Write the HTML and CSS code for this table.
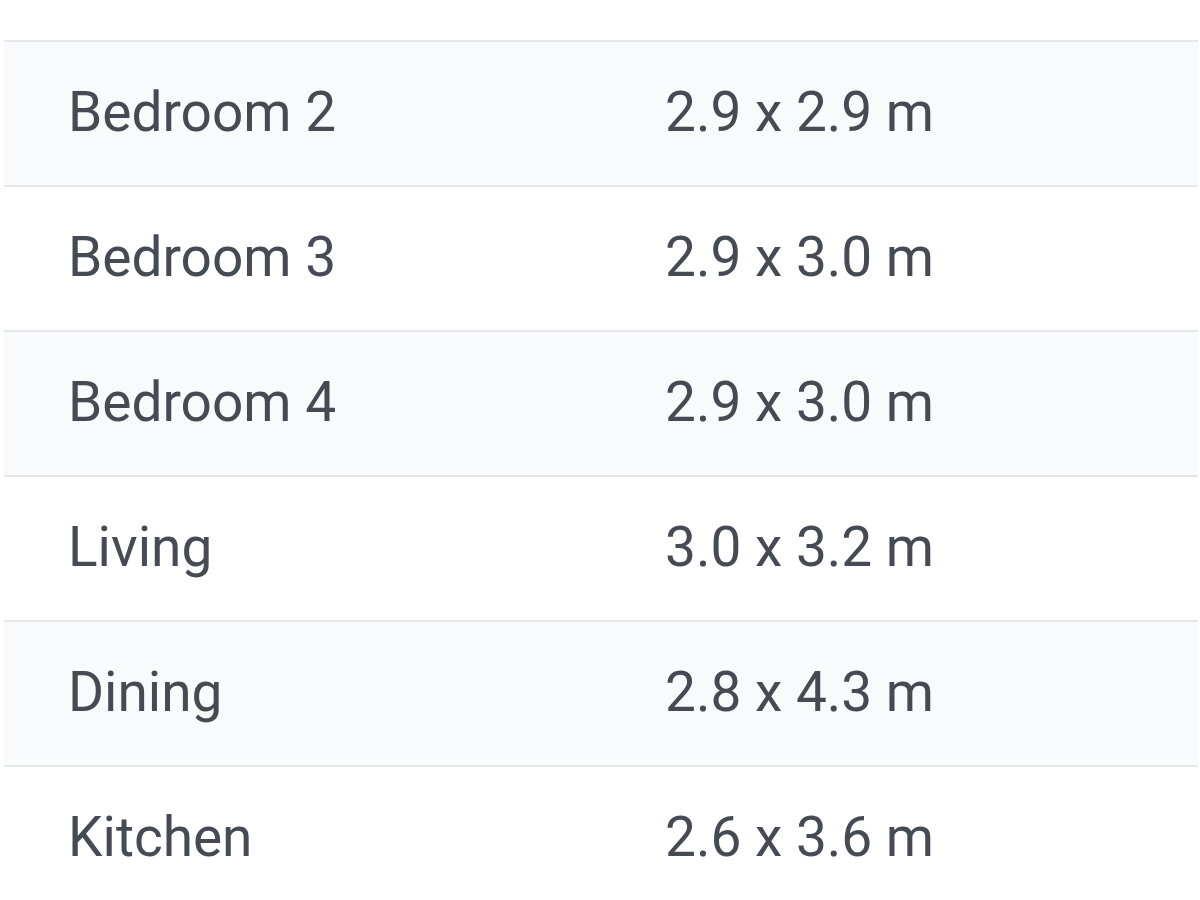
FILE: index.html
```html
<!DOCTYPE html>
<html>
<head>
<meta charset="utf-8">
<link rel="stylesheet" href="styles.css">
</head>
<body>
<div class="table">
  <div class="row odd"><div class="cell name">Bedroom 2</div><div class="cell size">2.9 x 2.9 m</div></div>
  <div class="row"><div class="cell name">Bedroom 3</div><div class="cell size">2.9 x 3.0 m</div></div>
  <div class="row odd"><div class="cell name">Bedroom 4</div><div class="cell size">2.9 x 3.0 m</div></div>
  <div class="row"><div class="cell name">Living</div><div class="cell size">3.0 x 3.2 m</div></div>
  <div class="row odd"><div class="cell name">Dining</div><div class="cell size">2.8 x 4.3 m</div></div>
  <div class="row"><div class="cell name">Kitchen</div><div class="cell size">2.6 x 3.6 m</div></div>
</div>
</body>
</html>
```
FILE: styles.css
```css
html, body {
  margin: 0;
  padding: 0;
  background: #ffffff;
  overflow: hidden;
}
.table {
  margin: 40px 2px 0 4px;
  font-family: Roboto, "Noto Sans", sans-serif;
  font-size: 55px;
  color: #464b53;
}
.row {
  display: grid;
  grid-template-columns: 597px 1fr;
  height: 143px;
  align-items: center;
  border-top: 2px solid #e5e7eb;
  background: #ffffff;
}
.row.odd {
  background: #f9fafb;
}
.cell {
  padding-left: 64px;
  padding-bottom: 3px;
  line-height: 1;
}
```
